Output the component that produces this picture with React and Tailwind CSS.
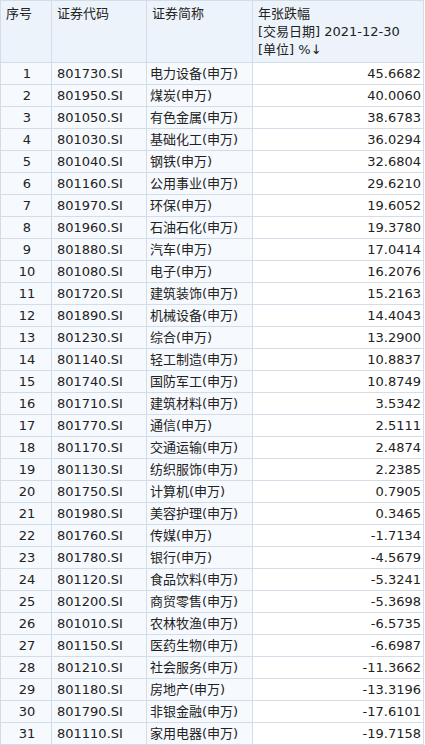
import React from "react";

const rows = [
  ["801730.SI", "电力设备(申万)", "45.6682"],
  ["801950.SI", "煤炭(申万)", "40.0060"],
  ["801050.SI", "有色金属(申万)", "38.6783"],
  ["801030.SI", "基础化工(申万)", "36.0294"],
  ["801040.SI", "钢铁(申万)", "32.6804"],
  ["801160.SI", "公用事业(申万)", "29.6210"],
  ["801970.SI", "环保(申万)", "19.6052"],
  ["801960.SI", "石油石化(申万)", "19.3780"],
  ["801880.SI", "汽车(申万)", "17.0414"],
  ["801080.SI", "电子(申万)", "16.2076"],
  ["801720.SI", "建筑装饰(申万)", "15.2163"],
  ["801890.SI", "机械设备(申万)", "14.4043"],
  ["801230.SI", "综合(申万)", "13.2900"],
  ["801140.SI", "轻工制造(申万)", "10.8837"],
  ["801740.SI", "国防军工(申万)", "10.8749"],
  ["801710.SI", "建筑材料(申万)", "3.5342"],
  ["801770.SI", "通信(申万)", "2.5111"],
  ["801170.SI", "交通运输(申万)", "2.4874"],
  ["801130.SI", "纺织服饰(申万)", "2.2385"],
  ["801750.SI", "计算机(申万)", "0.7905"],
  ["801980.SI", "美容护理(申万)", "0.3465"],
  ["801760.SI", "传媒(申万)", "-1.7134"],
  ["801780.SI", "银行(申万)", "-4.5679"],
  ["801120.SI", "食品饮料(申万)", "-5.3241"],
  ["801200.SI", "商贸零售(申万)", "-5.3698"],
  ["801010.SI", "农林牧渔(申万)", "-6.5735"],
  ["801150.SI", "医药生物(申万)", "-6.6987"],
  ["801210.SI", "社会服务(申万)", "-11.3662"],
  ["801180.SI", "房地产(申万)", "-13.3196"],
  ["801790.SI", "非银金融(申万)", "-17.6101"],
  ["801110.SI", "家用电器(申万)", "-19.7158"],
];

const cols = "grid grid-cols-[51px_95px_106px_171px]";

export default function App() {
  return (
    <div
      className="w-[425px] bg-white text-[13px] text-[#222] leading-none"
      style={{ fontFamily: '"DejaVu Sans", "Noto Sans CJK SC", sans-serif' }}
    >
      <div className="border-l border-t border-[#d3dde8] w-[424px]">
        <div className={`${cols} h-[62px] bg-[#edf3fa]`}>
          <div className="border-r border-b border-[#d3dde8] pl-[5px] pt-[6px]">序号</div>
          <div className="border-r border-b border-[#d3dde8] pl-[5px] pt-[6px]">证券代码</div>
          <div className="border-r border-b border-[#d3dde8] pl-[5px] pt-[6px]">证券简称</div>
          <div className="border-r border-b border-[#d3dde8] pl-[5px] pt-[6px] flex flex-col gap-[5px]">
            <span>年张跌幅</span>
            <span>[交易日期] 2021-12-30</span>
            <span>[单位] %↓</span>
          </div>
        </div>
        {rows.map((r, i) => (
          <div key={i} className={`${cols} h-[22px]`}>
            <div className="border-r border-b border-[#d3dde8] bg-[#f6f9fd] flex items-center justify-center pl-[2px]">
              {i + 1}
            </div>
            <div className="border-r border-b border-[#d3dde8] bg-[#f6f9fd] flex items-center pl-[5px]">{r[0]}</div>
            <div className="border-r border-b border-[#d3dde8] bg-[#f6f9fd] flex items-center pl-[3px]">{r[1]}</div>
            <div className="border-r border-b border-[#d3dde8] flex items-center justify-end pr-[2px]">{r[2]}</div>
          </div>
        ))}
      </div>
    </div>
  );
}
